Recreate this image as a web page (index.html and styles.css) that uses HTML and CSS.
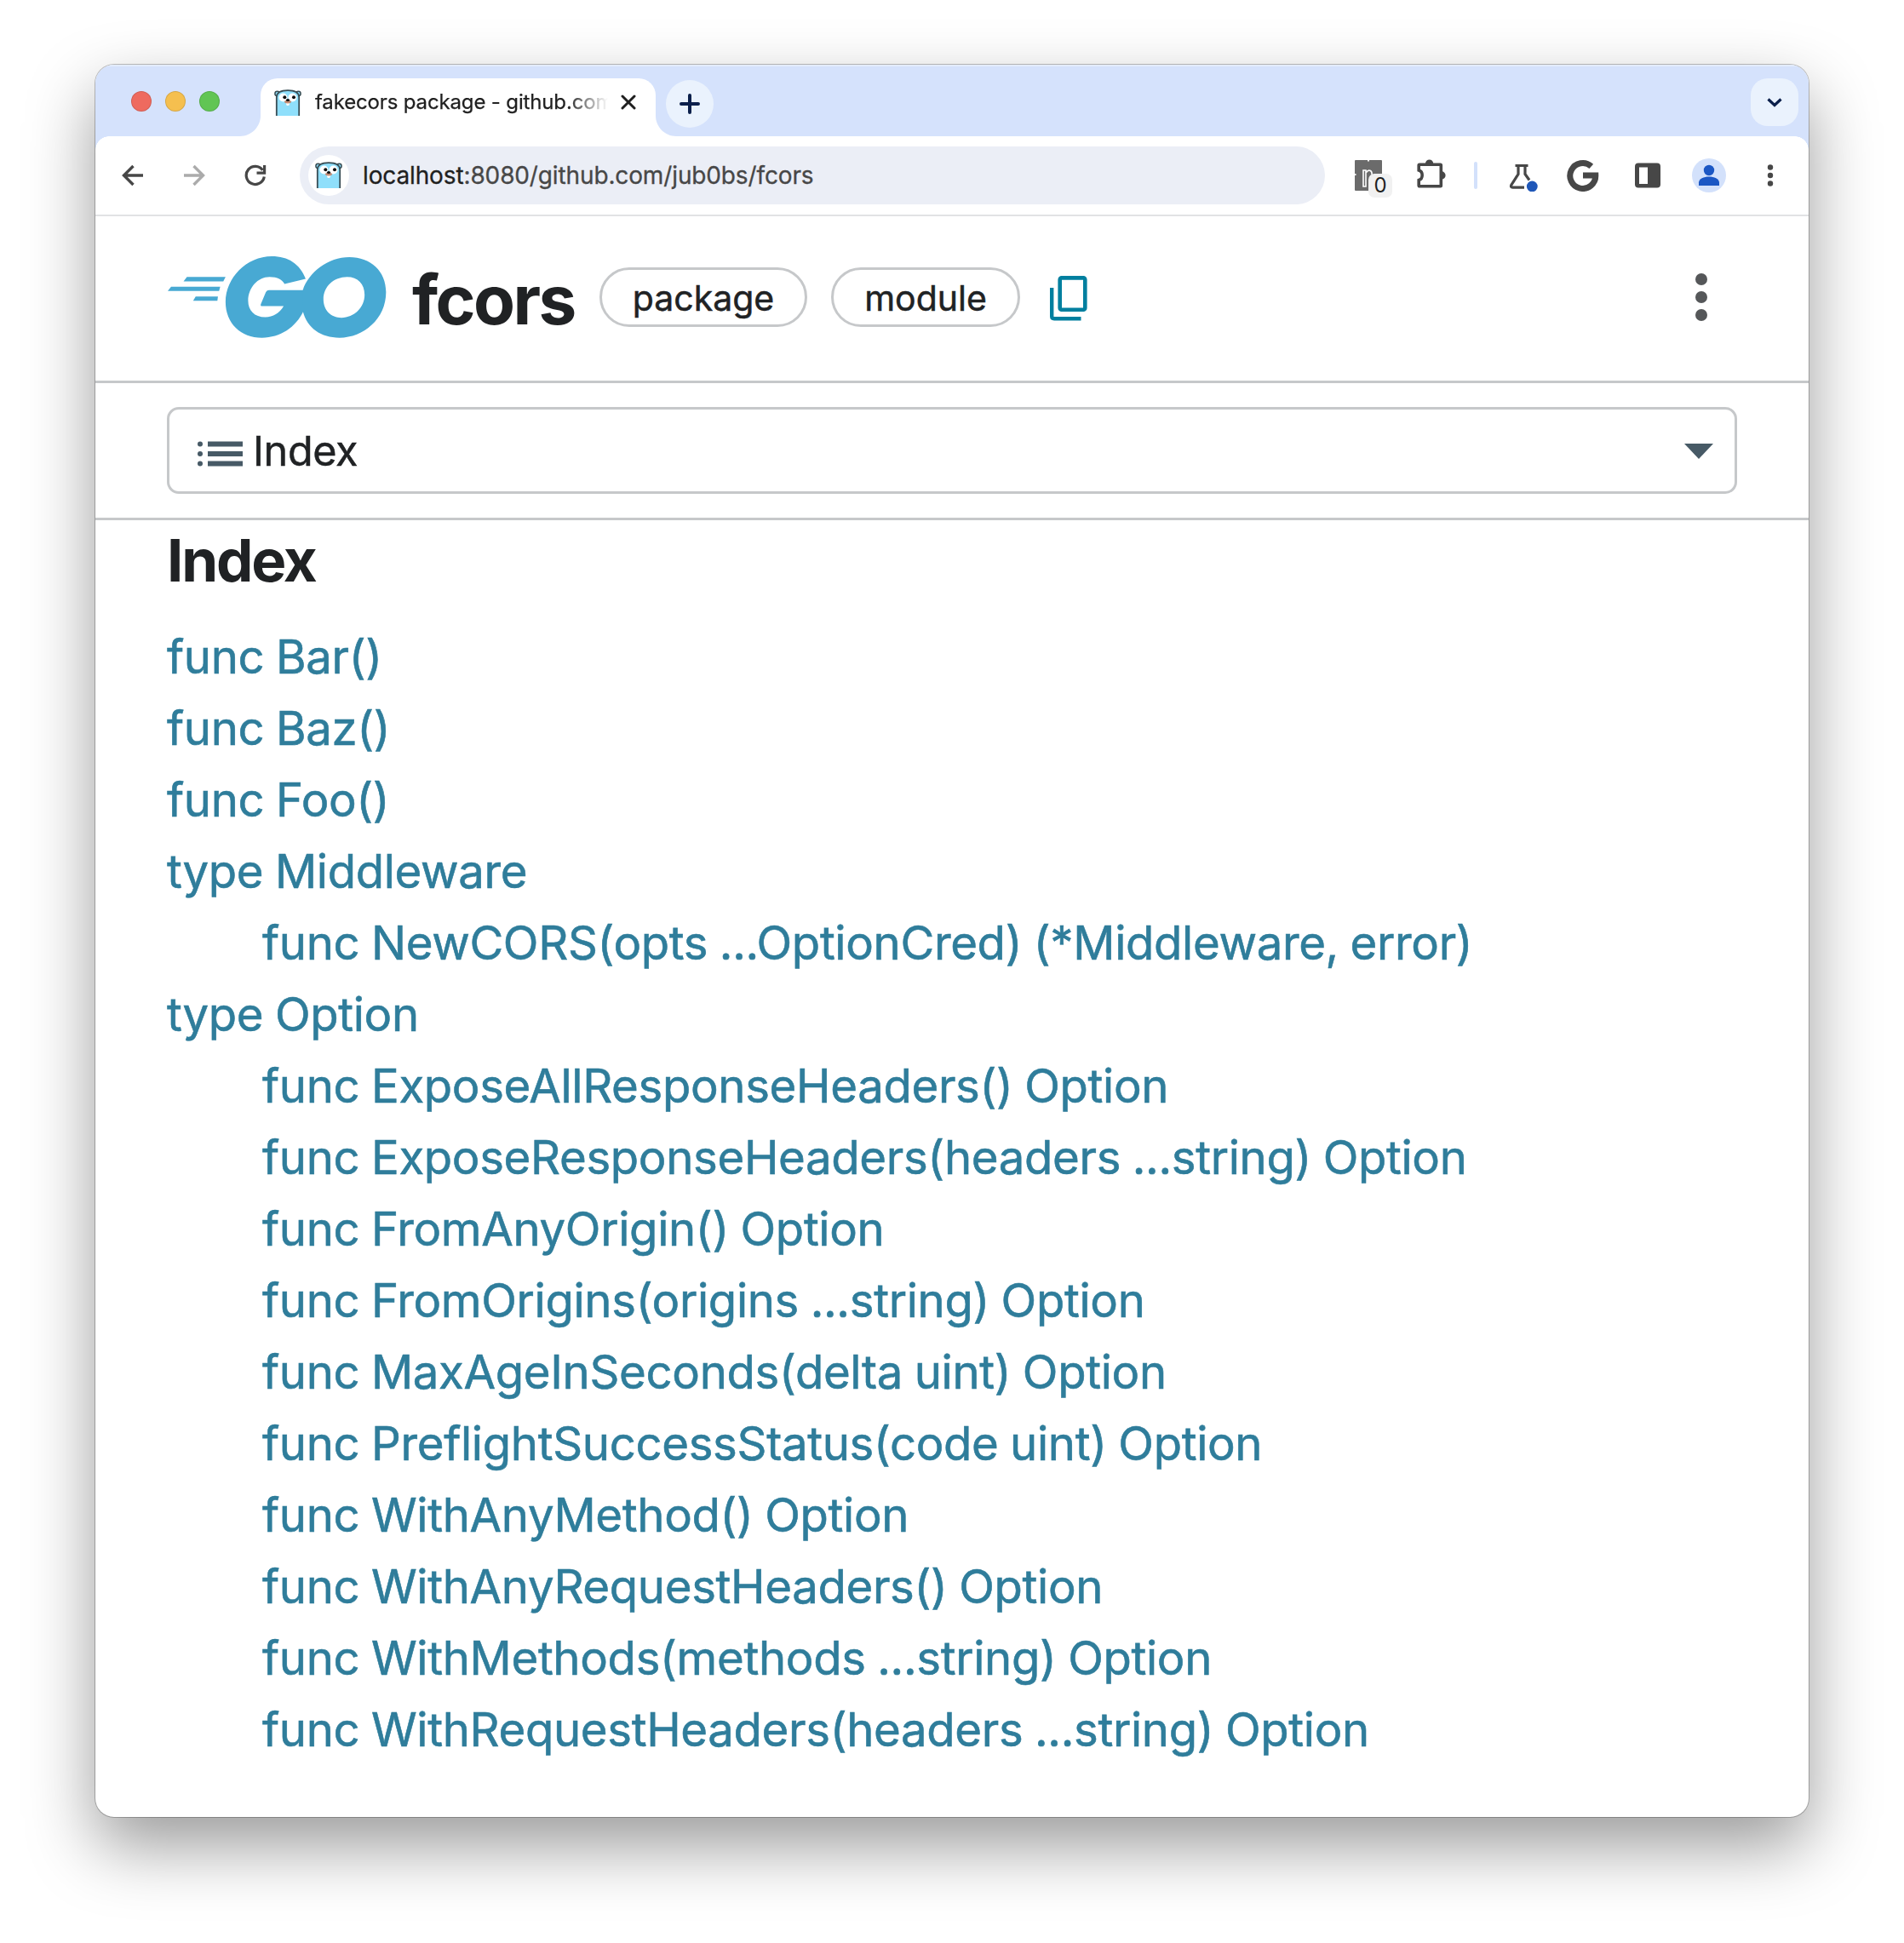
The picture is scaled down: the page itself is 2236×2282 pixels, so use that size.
FILE: index.html
```html
<!DOCTYPE html>
<html lang="en">
<head>
<meta charset="utf-8">
<title>fakecors package - github.com/jub0bs/fcors</title>
<link rel="stylesheet" href="styles.css">
</head>
<body>
<svg width="0" height="0" class="defs">
  <symbol id="gopher" viewBox="0 0 32 32">
    <circle cx="3.6" cy="5" r="2.7" fill="#8fdffb" stroke="#394d54" stroke-width="1.5"/>
    <circle cx="28.4" cy="5" r="2.7" fill="#8fdffb" stroke="#394d54" stroke-width="1.5"/>
    <path d="M2.8 31V9C3 3 9 1.2 16 1.2S29 3 29.2 9V31" fill="#8fdffb" stroke="#394d54" stroke-width="1.8"/>
    <circle cx="10.5" cy="9.5" r="5" fill="#fff"/>
    <circle cx="21.5" cy="9.5" r="5" fill="#fff"/>
    <circle cx="12.3" cy="9.2" r="2" fill="#111"/>
    <circle cx="23" cy="9.2" r="2" fill="#111"/>
    <rect x="14.2" y="15" width="3.6" height="4" rx="1.6" fill="#fff"/>
    <ellipse cx="16" cy="14.6" rx="4" ry="1.9" fill="#c38c74"/>
    <ellipse cx="16" cy="12.5" rx="2.1" ry="1.5" fill="#111"/>
  </symbol>
</svg>
<div class="window">
  <div class="tabstrip">
    <div class="lights"><i class="red"></i><i class="amber"></i><i class="green"></i></div>
    <div class="tab">
      <svg class="curve left" viewBox="0 0 24 24"><path d="M24 0V24H0C13 24 24 13 24 0Z" fill="#fff"/></svg>
      <svg class="favicon" viewBox="0 0 32 32"><use href="#gopher"/></svg>
      <span class="tab-title">fakecors package - github.com</span>
      <svg class="close" viewBox="0 0 18 18"><path d="M2 2L16 16M16 2L2 16" stroke="#1f1f1f" stroke-width="3" stroke-linecap="round"/></svg>
      <svg class="curve right" viewBox="0 0 24 24"><path d="M0 0V24H24C11 24 0 13 0 0Z" fill="#fff"/></svg>
    </div>
    <div class="new-tab"><svg width="24" height="24" viewBox="0 0 24 24"><path d="M12 2V22M2 12H22" stroke="#0b1f4b" stroke-width="4" stroke-linecap="round"/></svg></div>
    <div class="tab-search"><svg width="20" height="14" viewBox="0 0 20 14"><path d="M2.5 3.5L10 10.5L17.500 3.500" fill="none" stroke="#0b1f4b" stroke-width="3.200"/></svg></div>
  </div>
  <div class="toolbar">
    <svg class="back" width="26" height="26" viewBox="0 0 26 26"><path d="M25 13H3M13.500 2L2.500 13L13.500 24" fill="none" stroke="#474747" stroke-width="3.400"/></svg>
    <svg class="forward" width="26" height="26" viewBox="0 0 26 26"><path d="M1 13H23M12.500 2L23.500 13L12.500 24" fill="none" stroke="#ababab" stroke-width="3.400"/></svg>
    <svg class="reload" width="26" height="26" viewBox="0 0 26 26"><path d="M23.300 14.500A10.600 10.600 0 1 1 21.500 6.800" fill="none" stroke="#474747" stroke-width="3.200"/><path d="M23.600 1V10.200H14.500" fill="none" stroke="#474747" stroke-width="3.200"/></svg>
    <div class="omnibox">
      <span class="site"><svg class="favicon" viewBox="0 0 32 32"><use href="#gopher"/></svg></span>
      <span class="url"><b>localhost</b>:8080/github.com/jub0bs/fcors</span>
    </div>
    <div class="ext">
      <svg width="32" height="36" viewBox="0 0 32 36"><rect width="32" height="36" rx="1" fill="#6b6b6b"/><path d="M10 12H13V31H10ZM13.500 14.500Q15.500 11 18.500 12.500Q20.500 14 20 17" fill="none" stroke="#fff" stroke-width="1.600"/><path d="M15 0h2v1.500h-2ZM0 16h1.500v2H0Z" fill="#fff"/></svg>
      <span class="badge">0</span>
    </div>
    <svg class="puzzle" width="34" height="34" viewBox="0 0 34 34"><path d="M4 6.300H27.500Q28.300 6.300 28.300 7V31Q28.300 31.700 27.500 31.700H3Q2.200 31.700 2.200 31V24.500C7.500 23 7.500 14.500 2.200 13V7Q2.200 6.300 3 6.300Z" fill="none" stroke="#474747" stroke-width="3.600"/><path d="M10 5A4.600 4.600 0 0 1 19.200 5ZM29 14.300A4.600 4.600 0 0 1 29 23.500Z" fill="#474747"/></svg>
    <i class="divider"></i>
    <svg class="flask" width="36" height="36" viewBox="0 0 36 36"><path d="M7.500 5.500H22.500M11 6V15.500L3 28Q1.500 31.200 4.500 31.200H18M19 6V15.500L24 22.500" fill="none" stroke="#474747" stroke-width="3.200"/><circle cx="27.300" cy="30" r="6.400" fill="#1f57b8"/></svg>
    <svg class="google" width="38" height="38" viewBox="0 0 38 38"><path d="M28.800 8.300A15 15 0 1 0 33.800 19H19" fill="none" stroke="#474747" stroke-width="7"/></svg>
    <svg class="panel" width="30" height="30" viewBox="0 0 30 30"><rect y="0.500" width="30" height="29" rx="4" fill="#474747"/><rect x="5" y="5.500" width="10" height="19.500" fill="#fff"/></svg>
    <svg class="avatar" width="40" height="40" viewBox="0 0 40 40"><circle cx="20" cy="20" r="20" fill="#d3e1fb"/><circle cx="20" cy="14" r="6.200" fill="#1b57c4"/><path d="M8 32V28.500C8 24 14 21.500 20 21.500S32 24 32 28.500V32Z" fill="#1b57c4"/></svg>
    <svg class="menu" width="8" height="28" viewBox="0 0 8 28"><g fill="#474747"><circle cx="4" cy="4.500" r="3.200"/><circle cx="4" cy="14" r="3.200"/><circle cx="4" cy="23.500" r="3.200"/></g></svg>
  </div>
  <header class="header">
    <svg class="logo" viewBox="51 60 776 296" preserveAspectRatio="none">
      <g fill="#48a9d3">
        <path d="M119 136H256L248 152H107ZM63 171H237L233 186H51ZM150 206H229L227 221H141Z"/>
        <path d="M540 143C520 90 478 63 420 63C330 63 256 140 256 225C256 300 310 352 385 352C450 352 505 315 532 258L540 183H410Q403 183 399 190L381 233Q379 240 385 240H462C447 265 425 279 397 279C358 279 336 255 336 220C336 175 370 136 412 136C440 136 458 146 465 161Z"/>
        <path fill-rule="evenodd" d="M530 258C545 318 595 352 660 352C745 352 825 285 825 190C825 115 770 66 695 66C620 66 550 120 530 183ZM603 215C603 170 640 136 687 136C725 136 749 160 749 200C749 245 712 281 667 281C630 281 603 255 603 215Z"/>
      </g>
    </svg>
    <h1 class="name">fcors</h1>
    <span class="pill package"><span>package</span></span>
    <span class="pill module"><span>module</span></span>
    <svg class="copy" width="44" height="53" viewBox="0 0 44 53"><path d="M2.200 14V47.500Q2.200 50.200 5 50.200H36.500" fill="none" stroke="#007f9f" stroke-width="4.400"/><rect x="11.700" y="2.400" width="29.600" height="37.400" rx="2" fill="none" stroke="#007f9f" stroke-width="4.600"/></svg>
    <svg class="kebab" width="14" height="56" viewBox="0 0 14 56"><g fill="#555759"><circle cx="7" cy="7" r="7"/><circle cx="7" cy="28" r="7"/><circle cx="7" cy="49" r="7"/></g></svg>
  </header>
  <nav class="jump">
    <div class="select">
      <svg class="list-icon" width="54" height="30" viewBox="0 0 54 30"><g fill="#475a66"><circle cx="3" cy="3.500" r="3"/><circle cx="3" cy="15" r="3"/><circle cx="3" cy="26.500" r="3"/><path d="M12 .5H53V6.500H12ZM12 12H53V18H12ZM12 23.500H53V29.500H12Z"/></g></svg>
      <span class="select-text">Index</span>
      <svg class="caret" width="34" height="18" viewBox="0 0 34 18"><path d="M0 0H34L17 18Z" fill="#475a66"/></svg>
    </div>
  </nav>
  <main class="content">
    <h2 class="heading">Index</h2>
    <ul class="index">
      <li><a>func Bar()</a></li>
      <li><a>func Baz()</a></li>
      <li><a>func Foo()</a></li>
      <li><a>type Middleware</a></li>
      <li class="sub"><a>func NewCORS(opts ...OptionCred) (*Middleware, error)</a></li>
      <li><a>type Option</a></li>
      <li class="sub"><a>func ExposeAllResponseHeaders() Option</a></li>
      <li class="sub"><a>func ExposeResponseHeaders(headers ...string) Option</a></li>
      <li class="sub"><a>func FromAnyOrigin() Option</a></li>
      <li class="sub"><a>func FromOrigins(origins ...string) Option</a></li>
      <li class="sub"><a>func MaxAgeInSeconds(delta uint) Option</a></li>
      <li class="sub"><a>func PreflightSuccessStatus(code uint) Option</a></li>
      <li class="sub"><a>func WithAnyMethod() Option</a></li>
      <li class="sub"><a>func WithAnyRequestHeaders() Option</a></li>
      <li class="sub"><a>func WithMethods(methods ...string) Option</a></li>
      <li class="sub"><a>func WithRequestHeaders(headers ...string) Option</a></li>
    </ul>
  </main>
</div>
</body>
</html>
```
FILE: styles.css
```css
* { box-sizing: border-box; }
html { background: #fff; }
body {
  margin: 0;
  padding: 76px 112px 0;
  height: 2282px;
  overflow: hidden;
  font-family: Inter, "Liberation Sans", sans-serif;
  color: #202224;
}
.defs { position: absolute; }
svg { display: block; flex: none; }
.window {
  width: 2012px;
  height: 2058px;
  border-radius: 22px;
  overflow: hidden;
  background: #fff;
  box-shadow: 0 0 0 1px rgba(0, 0, 0, .24), 0 34px 80px rgba(0, 0, 0, .4);
}

/* Tab strip */
.tabstrip {
  display: flex;
  height: 84px;
  padding: 16px 12px 0 42px;
  background: #d5e2fc;
  box-shadow: inset 0 2px 0 #e3ecfd;
}
.lights { display: flex; gap: 16px; padding-top: 15px; width: 152px; }
.lights i { width: 24px; height: 24px; border-radius: 50%; border: 1px solid rgba(0, 0, 0, .12); }
.red { background: #ee6a5f; }
.amber { background: #f5bf4f; }
.green { background: #61c554; }
.tab {
  position: relative;
  display: flex;
  width: 464px;
  height: 68px;
  padding: 13px 0 0 16px;
  border-radius: 20px 20px 0 0;
  background: #fff;
}
.curve { position: absolute; bottom: 0; width: 24px; height: 24px; }
.curve.left { left: -24px; }
.curve.right { right: -24px; }
.favicon { width: 32px; height: 32px; }
.tab-title {
  width: 344px;
  margin-left: 16px;
  overflow: hidden;
  white-space: nowrap;
  font-size: 24px;
  line-height: 30px;
  letter-spacing: -.15px;
  color: #1f1f1f;
  -webkit-text-stroke: .25px currentColor;
  -webkit-mask-image: linear-gradient(90deg, #000 86%, transparent 100%);
  mask-image: linear-gradient(90deg, #000 86%, transparent 100%);
}
.close { width: 18px; height: 18px; margin: 6px 0 0 15px; }
.new-tab {
  display: grid;
  place-items: center;
  width: 56px;
  height: 56px;
  margin: 2px 0 0 12px;
  border-radius: 50%;
  background: #eaf2fd;
}
.tab-search {
  display: grid;
  place-items: center;
  width: 56px;
  height: 56px;
  margin-left: auto;
  border-radius: 20px;
  background: #eaf2fd;
}

/* Toolbar */
.toolbar {
  display: flex;
  align-items: center;
  height: 94px;
  padding: 0 0 0 31px;
  border-bottom: 2px solid #e1e2e4;
  background: radial-gradient(circle at 16px 16px, #fff 15.5px, #d5e2fc 16px) 0 0 / 16px 16px no-repeat,
    radial-gradient(circle at 0 16px, #fff 15.5px, #d5e2fc 16px) 100% 0 / 16px 16px no-repeat, #fff;
}
.forward { margin-left: 46px; }
.reload { margin-left: 46px; }
.omnibox {
  display: flex;
  align-items: center;
  width: 1204px;
  height: 68px;
  margin-left: 39px;
  padding-left: 10px;
  border-radius: 34px;
  background: #ebeef6;
}
.site { display: grid; place-items: center; width: 48px; height: 48px; border-radius: 50%; background: #fff; }
.url { margin-left: 16px; font-size: 28px; letter-spacing: -.13px; color: #474747; white-space: nowrap; -webkit-text-stroke: .3px currentColor; }
.url b { font-weight: 400; color: #1f1f1f; }
.ext { position: relative; margin-left: 35px; }
.badge {
  position: absolute;
  left: 16px;
  top: 16px;
  width: 28px;
  height: 28px;
  border-radius: 7px;
  background: #f1f1f1;
  font-size: 24px;
  line-height: 28px;
  text-align: center;
  color: #1f1f1f;
}
.puzzle { margin: -4px 0 0 41px; }
.divider { width: 4px; height: 32px; margin-left: 33px; border-radius: 2px; background: #d3e1fb; }
.flask { margin: 2px 0 0 37px; }
.google { margin-left: 32px; }
.panel { margin-left: 42px; }
.avatar { margin-left: 37px; }
.menu { margin-left: 48px; }

/* Page header */
.header { display: flex; align-items: center; height: 196px; padding: 0 119px 3px 85px; border-bottom: 3px solid #c6c8ca; }
.logo { width: 257px; height: 98px; }
.name { width: 190px; margin: 6px 0 0 30px; font-size: 80px; font-weight: 700; line-height: 100px; letter-spacing: -2.6px; }
.pill {
  display: grid;
  place-items: center;
  height: 70px;
  padding-top: 2px;
  border: 3px solid #c6c8ca;
  border-radius: 35px;
  font-size: 41px;
  line-height: 62px;
  -webkit-text-stroke: .5px currentColor;
}
.package { width: 244px; margin-left: 30px; }
.module { width: 222px; margin-left: 28px; }
.copy { margin: 2px 0 0 35px; }
.kebab { margin-left: auto; }

/* Section picker */
.jump { height: 161px; padding: 28px 84px 0; border-bottom: 3px solid #c6c8ca; }
.select {
  display: flex;
  align-items: center;
  height: 102px;
  padding: 0 25px 0 33px;
  border: 3px solid #c6c8ca;
  border-radius: 14px;
}
.list-icon { margin-top: 8px; }
.select-text { margin: 2px 0 0 11px; font-size: 48.5px; line-height: 60px; letter-spacing: -.4px; -webkit-text-stroke: .5px currentColor; }
.caret { margin: 2px 0 0 auto; }

/* Index */
.content { padding: 2px 84px 0; }
.heading { margin: 0 0 26px; font-size: 69px; font-weight: 700; line-height: 90px; letter-spacing: -2.2px; }
.index {
  margin: 0;
  padding: 0;
  list-style: none;
  font-size: 54.5px;
  line-height: 84px;
  letter-spacing: -.34px;
  word-spacing: -1.4px;
  color: #2f7d9b;
  white-space: nowrap;
  -webkit-text-stroke: .6px currentColor;
}
.sub { padding-left: 112px; }
```
